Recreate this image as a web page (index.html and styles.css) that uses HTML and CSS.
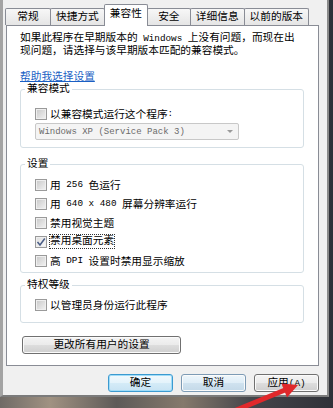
FILE: index.html
```html
<html>
	<head>
		<title>属性 - 兼容性</title>
		<link rel="stylesheet" href="styles.css">
	</head>
	<body>
		<div class="window">
			<div class="tabs">
				<div class="tab first">常规</div>
				<div class="tab">快捷方式</div>
				<div class="tab selected">兼容性</div>
				<div class="tab">安全</div>
				<div class="tab">详细信息</div>
				<div class="tab">以前的版本</div>
			</div>
			<div class="panel">
				<p class="intro">如果此程序在早期版本的<span class="en"> Windows </span>上没有问题，而现在出<br>现问题，请选择与该早期版本匹配的兼容模式。</p>
				<a class="help" href="#">帮助我选择设置</a>

				<fieldset class="group compat">
					<legend>兼容模式</legend>
					<div class="check"><span class="box"></span>以兼容模式运行这个程序<span class="en">:</span></div>
					<div class="select">
						<span class="en">Windows XP (Service Pack 3)</span>
						<span class="caret"></span>
					</div>
				</fieldset>

				<fieldset class="group settings">
					<legend>设置</legend>
					<div class="check"><span class="box"></span>用<span class="en"> 256 </span>色运行</div>
					<div class="check"><span class="box"></span>用<span class="en"> 640 x 480 </span>屏幕分辨率运行</div>
					<div class="check"><span class="box"></span>禁用视觉主题</div>
					<div class="check"><span class="box checked"><svg width="10" height="10" viewBox="0 0 10 10"><path d="M1.5 5 L4 8 L8.8 1.5" fill="none" stroke="#4a5d86" stroke-width="1.5"/></svg></span><span class="focus">禁用桌面元素</span></div>
					<div class="check"><span class="box"></span>高<span class="en"> DPI </span>设置时禁用显示缩放</div>
				</fieldset>

				<fieldset class="group privilege">
					<legend>特权等级</legend>
					<div class="check"><span class="box"></span>以管理员身份运行此程序</div>
				</fieldset>

				<button class="btn wide">更改所有用户的设置</button>
			</div>
			<div class="actions">
				<button class="btn default">确定</button>
				<button class="btn hover">取消</button>
				<button class="btn">应用<span class="en">(A)</span></button>
			</div>
		</div>

		<!-- red pointer over the apply button -->
		<svg class="pointer" width="333" height="408" viewBox="0 0 333 408">
			<path d="M234 411 L285 390" stroke="#e0282b" stroke-width="5" fill="none"/>
			<polygon points="298,385 281.5,383.5 287,397.5" fill="#e0282b"/>
		</svg>
	</body>
</html>
```

FILE: styles.css
```css
body
{
	margin: 0;
	width: 333px;
	height: 408px;
	overflow: hidden;
	position: relative;
	background: linear-gradient(to right, #6f6a66 0%, #a09282 15%, #5d5a58 35%, #85796c 55%, #45464b 75%, #2f3138 100%);
	font-family: "Liberation Mono", "Noto Sans CJK SC", monospace;
	font-size: 10.7px;
	color: #000;
}

.en
{
	font-size: 9.3px;
}

.window
{
	width: 329px;
	height: 397px;
	box-sizing: border-box;
	background-color: #f0f0f0;
	border-left: 3px solid #a3a3a3;
	border-right: 2px solid #8a8a8a;
	border-bottom: 2px solid #7b7b7b;
	padding: 4px 0 0 2px;
}

/* tabs */
.tabs
{
	display: flex;
	align-items: flex-end;
	height: 21px;
}

.tab
{
	box-sizing: border-box;
	height: 17px;
	min-width: 44px;
	padding: 1px 5px 0;
	line-height: 15px;
	text-align: center;
	border: 1px solid #898c95;
	border-bottom: none;
	border-radius: 2px 2px 0 0;
	background: linear-gradient(#f7f7f7, #e5e5e5);
	margin-left: -1px;
}

.tab.first
{
	margin-left: 0;
	min-width: 46px;
}

.tab.selected
{
	height: 22px;
	margin-bottom: -1px;
	padding-top: 2px;
	background: #fff;
	position: relative;
	z-index: 1;
}

/* page */
.panel
{
	margin-left: 1px;
	width: 313px;
	height: 341px;
	box-sizing: border-box;
	border: 1px solid #898c95;
	background-color: #fff;
	padding: 6px 0 0 13px;
}

.intro
{
	margin: 0;
	line-height: 12px;
}

.help
{
	display: block;
	margin-top: 14px;
	line-height: 12px;
	color: #1a5fc4;
	text-decoration: underline;
	width: fit-content;
}

.group
{
	margin: 0;
	min-width: 0;
	width: 284px;
	box-sizing: border-box;
	border: 1px solid #d5dfe5;
	border-radius: 3px;
	padding: 0 0 0 14px;
}

.group legend
{
	padding: 0 2px;
	margin-left: -10px;
	line-height: 12px;
}

.compat
{
	padding-top: 9px;
	padding-bottom: 7px;
}

.settings
{
	margin-top: 10px;
	padding-top: 5px;
	padding-bottom: 2px;
}

.privilege
{
	margin-top: 6px;
	padding-top: 4px;
	padding-bottom: 8px;
}

.check
{
	display: flex;
	align-items: center;
	height: 19px;
	white-space: pre;
}

.box
{
	width: 12px;
	height: 12px;
	box-sizing: border-box;
	border: 1px solid #9a9a9a;
	background: linear-gradient(135deg, #c8c8c8, #f3f3f3);
	box-shadow: inset 0 0 0 1px #efefef;
	margin-right: 3px;
	display: flex;
	align-items: center;
	justify-content: center;
}

.box.checked
{
	background: linear-gradient(135deg, #dcdcdc, #fafafa);
}

.focus
{
	outline: 1px dotted #333;
	outline-offset: 0;
	line-height: 13px;
}

.select
{
	display: flex;
	align-items: center;
	justify-content: space-between;
	width: 204px;
	height: 17px;
	box-sizing: border-box;
	border: 1px solid #c8c8c8;
	border-radius: 2px;
	background-color: #f4f4f4;
	color: #6b6b6b;
	padding: 0 5px 0 3px;
}

.select .en
{
	font-size: 9px;
}

.caret
{
	width: 0;
	height: 0;
	border-left: 3px solid transparent;
	border-right: 3px solid transparent;
	border-top: 3px solid #9a9a9a;
}

/* buttons */
.btn
{
	width: 65px;
	height: 18px;
	box-sizing: border-box;
	border: 1px solid #707070;
	border-radius: 3px;
	background: linear-gradient(#f4f4f4 0%, #ebebeb 48%, #dddddd 52%, #cfcfcf 100%);
	box-shadow: inset 0 0 0 1px #fbfbfb;
	font: inherit;
	color: #000;
	padding: 0;
	line-height: 16px;
	text-align: center;
}

.btn.wide
{
	display: block;
	width: 159px;
	margin: 13px 0 0 2px;
}

.btn.default
{
	border-color: #3c9ad0;
	box-shadow: inset 0 0 0 1px #9fdcf8;
	background: linear-gradient(#f2f9fd 0%, #e4f3fb 48%, #d4ebf7 52%, #c8e3f3 100%);
}

.btn.hover
{
	border-color: #7d9bb5;
	background: linear-gradient(#eef6fb 0%, #e0eef7 48%, #cfe2ef 52%, #c4d9e8 100%);
}

.actions
{
	display: flex;
	justify-content: flex-end;
	gap: 8px;
	width: 314px;
	margin-top: 8px;
}

.pointer
{
	position: absolute;
	left: 0;
	top: 0;
	pointer-events: none;
}
```
